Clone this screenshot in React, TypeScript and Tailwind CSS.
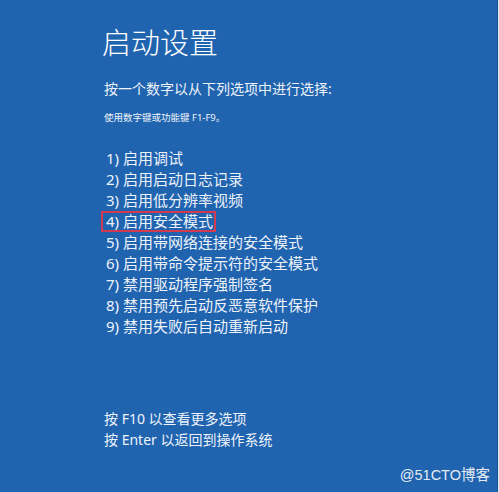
import React from "react";

const items = [
  "1) 启用调试",
  "2) 启用启动日志记录",
  "3) 启用低分辨率视频",
  "4) 启用安全模式",
  "5) 启用带网络连接的安全模式",
  "6) 启用带命令提示符的安全模式",
  "7) 禁用驱动程序强制签名",
  "8) 禁用预先启动反恶意软件保护",
  "9) 禁用失败后自动重新启动",
];

export default function App() {
  return (
    <div className="flex w-[499px] h-[492px] overflow-hidden">
      <div
        className="flex-1 flex flex-col bg-[#2064b0] text-white pl-[102px] pt-[28px]"
        style={{ fontFamily: '"Noto Sans", "Noto Sans CJK SC", sans-serif' }}
      >
        <div className="text-[29px] leading-[29px] font-light">启动设置</div>
        <div className="mt-[24px] pl-[2px] text-[14px] leading-[16px] text-[#eef3fa]">
          按一个数字以从下列选项中进行选择:
        </div>
        <div className="mt-[15px] pl-[2px] text-[9.5px] leading-[12px] text-[#eef3fa]">
          使用数字键或功能键 F1-F9。
        </div>
        <div className="mt-[24px] flex flex-col">
          {items.map((t, i) => (
            <div key={t} className="flex">
              {i === 3 ? (
                <div className="ml-[-1px] pl-[3px] pr-[1px] h-[21px] flex items-center border-2 border-[#d13a50] text-[15px] leading-[21px] text-[#eef3fa]">
                  {t}
                </div>
              ) : (
                <div className="pl-[4px] text-[15px] leading-[21px] text-[#eef3fa]">{t}</div>
              )}
            </div>
          ))}
        </div>
        <div className="mt-[72px] pl-[2px] flex flex-col text-[14px] leading-[20.5px] text-[#eef3fa]">
          <div>按 F10 以查看更多选项</div>
          <div>按 Enter 以返回到操作系统</div>
        </div>
        <div
          className="mt-[17px] self-end pr-[7px] text-[14.5px] leading-[16px] text-[#e6ebf2]"
          style={{ fontFamily: '"Liberation Sans", "Noto Sans CJK SC", sans-serif' }}
        >
          @51CTO博客
        </div>
      </div>
      <div className="w-[1px] bg-[#1c4f8c]" />
      <div className="w-[1px] bg-[#c9f1ff]" />
    </div>
  );
}
